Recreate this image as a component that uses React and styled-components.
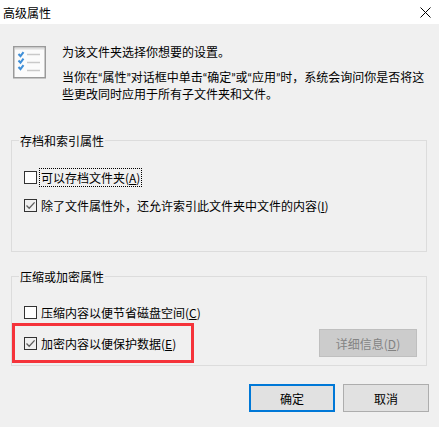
import React from "react";
import styled, { createGlobalStyle } from "styled-components";

const Global = createGlobalStyle`
  html, body { margin: 0; padding: 0; background: #f0f0f0; }
  * { box-sizing: border-box; }
`;

const Dialog = styled.div`
  position: relative;
  width: 439px;
  height: 427px;
  display: flex;
  flex-direction: column;
  overflow: hidden;
  background: #f0f0f0;
  color: #000;
  font: 12px/17px "Noto Sans CJK SC", "Liberation Sans", sans-serif;
`;

const TitleBar = styled.div`
  height: 24px;
  flex: none;
  background: #fff;
  display: flex;
  align-items: center;
  justify-content: space-between;
  padding: 0 8px 0 3px;
`;

const Body = styled.div`
  flex: 1;
  display: flex;
  flex-direction: column;
  padding: 19px 12px 0 11px;
`;

const Intro = styled.div`
  display: flex;
  gap: 16px;
  padding-left: 2px;
  height: 89px;
  flex: none;
`;

const IntroIcon = styled.svg`
  width: 33px;
  height: 33px;
  flex: none;
  margin-top: 3px;
`;

const IntroText = styled.div`
  display: flex;
  flex-direction: column;
  gap: 8px;
  width: 368px;
  padding-top: 1px;
  font-family: Lato, "Noto Sans CJK SC", sans-serif;
`;

const Group = styled.fieldset`
  margin: 0 0 ${p => p.$gap}px;
  padding: 0;
  height: ${p => p.$height}px;
  border: 1px solid #dcdcdc;
  min-width: 0;
`;

const GroupTitle = styled.legend`
  margin-left: 7px;
  padding: 0 1px;
  line-height: 17px;
`;

const Options = styled.div`
  display: flex;
  flex-direction: column;
  padding: ${p => p.$top}px 9px 0 12px;
  gap: ${p => p.$gap}px;
`;

const Row = styled.div`
  display: flex;
  align-items: center;
  justify-content: space-between;
  height: 17px;
`;

const Check = styled.label`
  display: flex;
  align-items: center;
  gap: 3px;
`;

const Box = styled.span`
  width: 13px;
  height: 13px;
  flex: none;
  background: ${p => (p.$checked ? "transparent" : "#fff")};
  border: 1px solid #333;
  display: flex;
  align-items: center;
  justify-content: center;
`;

const CheckLabel = styled.span`
  padding: 0 1px;
  outline: ${p => (p.$focus ? "1px dotted #000" : "none")};
  u { text-decoration: underline; text-underline-offset: 1px; }
`;

const DetailButton = styled.button`
  width: 98px;
  height: 28px;
  margin-top: -1px;
  background: #cccccc;
  border: 1px solid #bfbfbf;
  color: #838383;
  font: inherit;
  padding: 0;
`;

const Footer = styled.div`
  display: flex;
  justify-content: flex-end;
  gap: 8px;
  margin-right: -2px;
`;

const Button = styled.button`
  width: 86px;
  height: 28px;
  background: #e1e1e1;
  color: #000;
  font: inherit;
  padding: 0;
  border: ${p => (p.$primary ? "2px solid #0078d7" : "1px solid #adadad")};
`;

const Highlight = styled.div`
  position: absolute;
  left: 12px;
  top: 323px;
  width: 182px;
  height: 40px;
  border: 3px solid #f5333a;
  pointer-events: none;
`;

const Tick = () => (
  <svg width="11" height="11" viewBox="0 0 11 11">
    <path d="M1.5 5.5 L4.2 8.3 L9.6 2.4" fill="none" stroke="#5f5f5f" strokeWidth="1.3" />
  </svg>
);

const CloseIcon = () => (
  <svg width="11" height="11" viewBox="0 0 11 11">
    <path d="M.5.5l10 10M10.5.5l-10 10" fill="none" stroke="#000" strokeWidth="1" />
  </svg>
);

const ListIcon = () => (
  <IntroIcon viewBox="0 0 33 33">
    <rect x=".75" y=".75" width="31.5" height="31" fill="#fbfbfb" stroke="#9a9a9a" strokeWidth="1.5" />
    <rect x="2" y="2" width="29" height="1.5" fill="#dedede" />
    <path d="M5.5 8l2 2.2 3-4M5.5 14.5l2 2.2 3-4M5.5 21l2 2.2 3-4" fill="none" stroke="#3f8fd8" strokeWidth="2" />
    <path d="M14 8.5h13M14 16.5h13M14 24.5h13" stroke="#c9c9c9" strokeWidth="1.5" />
  </IntroIcon>
);

const Option = ({ checked, focus, children }) => (
  <Check>
    <Box $checked={checked}>{checked && <Tick />}</Box>
    <CheckLabel $focus={focus}>{children}</CheckLabel>
  </Check>
);

export default function App() {
  return (
    <>
      <Global />
      <Dialog>
        <TitleBar>
          <span>高级属性</span>
          <CloseIcon />
        </TitleBar>
        <Body>
          <Intro>
            <ListIcon />
            <IntroText>
              <span>为该文件夹选择你想要的设置。</span>
              <span>当你在“属性”对话框中单击“确定”或“应用”时，系统会询问你是否将这些更改同时应用于所有子文件夹和文件。</span>
            </IntroText>
          </Intro>
          <Group $height={120} $gap={16}>
            <GroupTitle>存档和索引属性</GroupTitle>
            <Options $top={20} $gap={11}>
              <Row>
                <Option focus>可以存档文件夹(<u>A</u>)</Option>
              </Row>
              <Row>
                <Option checked>除了文件属性外，还允许索引此文件夹中文件的内容(<u>I</u>)</Option>
              </Row>
            </Options>
          </Group>
          <Group $height={98} $gap={18}>
            <GroupTitle>压缩或加密属性</GroupTitle>
            <Options $top={19} $gap={14}>
              <Row>
                <Option>压缩内容以便节省磁盘空间(<u>C</u>)</Option>
              </Row>
              <Row>
                <Option checked>加密内容以便保护数据(<u>E</u>)</Option>
                <DetailButton disabled>详细信息(<u>D</u>)</DetailButton>
              </Row>
            </Options>
          </Group>
          <Footer>
            <Button $primary>确定</Button>
            <Button>取消</Button>
          </Footer>
        </Body>
        <Highlight />
      </Dialog>
    </>
  );
}
